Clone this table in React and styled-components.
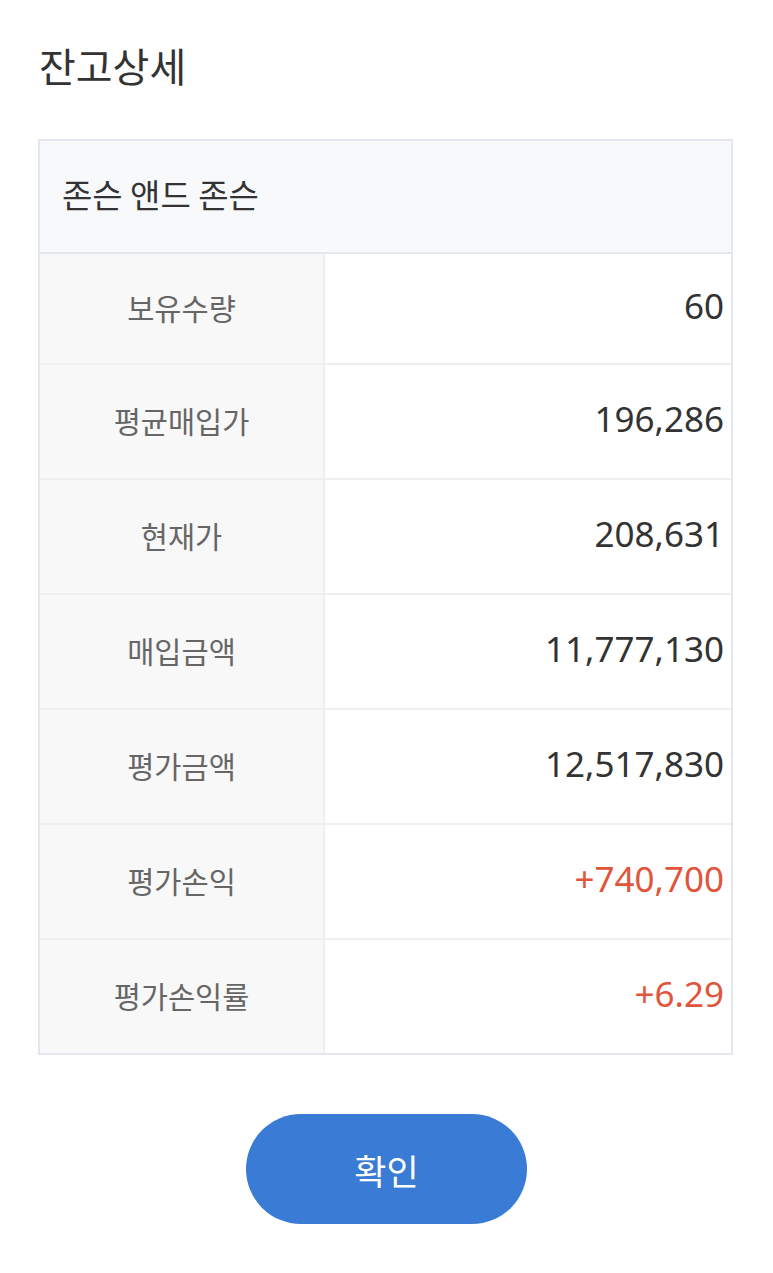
import React from "react";
import styled, { createGlobalStyle } from "styled-components";

const GlobalStyle = createGlobalStyle`
  html, body {
    margin: 0;
    padding: 0;
    background: #ffffff;
  }
  body {
    font-family: "Noto Sans CJK KR", "Noto Sans", sans-serif;
  }
`;

const rows = [
  { label: "보유수량", value: "60" },
  { label: "평균매입가", value: "196,286" },
  { label: "현재가", value: "208,631" },
  { label: "매입금액", value: "11,777,130" },
  { label: "평가금액", value: "12,517,830" },
  { label: "평가손익", value: "+740,700", up: true },
  { label: "평가손익률", value: "+6.29", up: true },
];

const App = () => {
  return (
    <Sheet>
      <GlobalStyle />
      <Title>잔고상세</Title>
      <Table>
        <StockName>존슨 앤드 존슨</StockName>
        {rows.map((row, i) => (
          <Row key={row.label} first={i === 0} last={i === rows.length - 1}>
            <Label>{row.label}</Label>
            <Value up={row.up}>{row.value}</Value>
          </Row>
        ))}
      </Table>
      <ButtonBox>
        <ConfirmButton>확인</ConfirmButton>
      </ButtonBox>
    </Sheet>
  );
};

const Sheet = styled.div`
  width: 773px;
  min-height: 1273px;
  box-sizing: border-box;
  padding: 37px 40px 0 38px;
  background: #ffffff;
`;

const Title = styled.h1`
  margin: 0 0 46px 1px;
  font-size: 40px;
  line-height: 56px;
  font-weight: 400;
  color: #333333;
`;

const Table = styled.div`
  border: 2px solid #e4e7ee;
  display: flex;
  flex-direction: column;
`;

const StockName = styled.div`
  height: 113px;
  box-sizing: border-box;
  padding: 0 0 5px 22px;
  display: flex;
  align-items: center;
  background: #f8f9fb;
  border-bottom: 2px solid #e4e7ee;
  font-size: 33px;
  color: #333333;
`;

const Row = styled.div`
  display: grid;
  grid-template-columns: 285px 1fr;
  height: ${(p) => (p.first ? "109px" : "113px")};
  border-bottom: ${(p) => (p.last ? "none" : "2px solid #efefef")};
`;

const Label = styled.div`
  display: flex;
  align-items: center;
  justify-content: center;
  padding-bottom: 3px;
  background: #f8f8f8;
  border-right: 2px solid #efefef;
  font-size: 29.5px;
  color: #666666;
`;

const Value = styled.div`
  display: flex;
  align-items: center;
  justify-content: flex-end;
  padding: 0 7px 6px 0;
  font-family: "Noto Sans", "Noto Sans CJK KR", sans-serif;
  font-size: 35px;
  color: ${(p) => (p.up ? "#e0553b" : "#333333")};
`;

const ButtonBox = styled.div`
  display: flex;
  justify-content: center;
  margin-top: 59px;
  margin-left: -38px;
  margin-right: -40px;
`;

const ConfirmButton = styled.button`
  width: 281px;
  height: 110px;
  border: none;
  border-radius: 55px;
  background: #3a7bd5;
  color: #ffffff;
  font-family: "Noto Sans CJK KR", "Noto Sans", sans-serif;
  font-size: 35px;
  cursor: pointer;
`;

export default App;
